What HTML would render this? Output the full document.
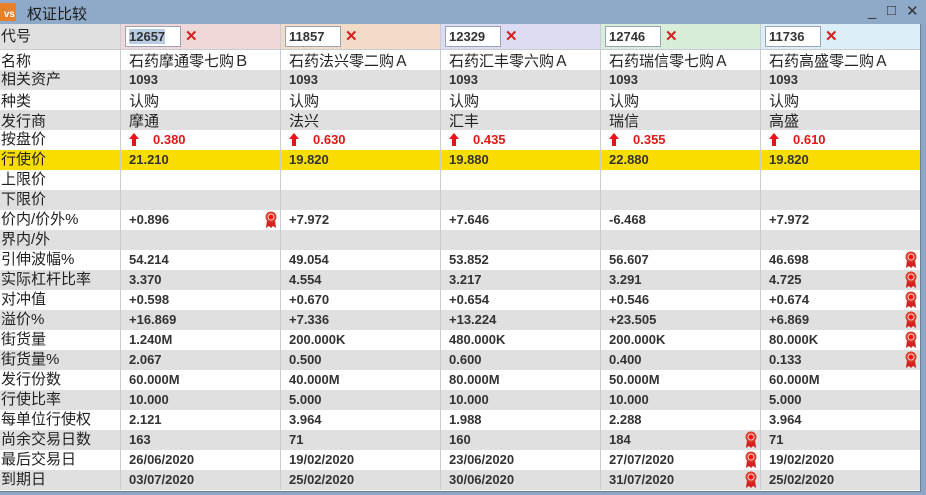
<!DOCTYPE html><html><head><meta charset="utf-8"><style>
*{margin:0;padding:0;box-sizing:border-box}
body{width:926px;height:495px;background:#8ea6c6;overflow:hidden;font-family:"Liberation Sans","Noto Sans CJK SC",sans-serif;position:relative}
.tb{position:absolute;left:0;top:0;width:926px;height:24px;background:#8fa9c9}
.logo{position:absolute;left:0;top:3px;width:16px;height:18px;background:#e8802a;color:#fff;font:bold 10px "Liberation Sans",sans-serif;line-height:24px;text-align:right;padding-right:1px}
.tt{position:absolute;left:27px;top:3px;font-size:15px;color:#1a1a1a}
.ctl{position:absolute;top:3px;font-size:15px;color:#333}
.win{position:absolute;left:0;top:24px;width:921px;height:468px;background:#fff;border-right:1px solid #6e7f96;border-bottom:1px solid #6e7f96}
.r{display:grid;grid-template-columns:120px 160px 160px 160px 160px 160px;height:20px}
.r>div{border-left:1px solid #c8ccd4;padding-left:8px;font:bold 13px "Liberation Sans",sans-serif;color:#333;line-height:20px;position:relative;white-space:nowrap}
.r>div:first-child{border-left:none;padding-left:1px;font:15px "Liberation Sans","Noto Sans CJK SC",sans-serif;color:#222;line-height:20px}
.g{background:#e0e0e0}
.y{background:#f8de00}
.cn>div{font:15px "Liberation Sans","Noto Sans CJK SC",sans-serif!important;color:#222!important}
.r.h{height:26px;border-bottom:1px solid #c8ccd4}
.r.h>div{line-height:25px}
.in{position:absolute;left:4px;top:2px;width:56px;height:21px;border:1px solid #9aa4b4;background:#fff;font:bold 13px "Liberation Sans",sans-serif;line-height:19px;padding-left:3px;color:#333}
.x{position:absolute;left:64px;top:3px;line-height:20px;color:#d42020;font:bold 15px "Liberation Sans",sans-serif}
.red{color:#e01818!important}
.ar{display:inline-block;width:24px;vertical-align:-2px}
.rb{position:absolute;right:3px;top:1px}
</style></head><body>
<div class="tb"><div class="logo">vs</div><div class="tt">权证比较</div>
<div class="ctl" style="left:868px;">_</div><div class="ctl" style="left:887px;top:2px">□</div><div class="ctl" style="left:906px;top:2px">✕</div></div>
<div class="win">
<div class="r h"><div class="g">代号</div>
<div style="background:#f0d8d8"><span class="in" style="background:#fff"><span style="background:#b8cce4">12657</span></span><span class="x">✕</span></div>
<div style="background:#f2dcc8"><span class="in">11857</span><span class="x">✕</span></div>
<div style="background:#dcdcf2"><span class="in">12329</span><span class="x">✕</span></div>
<div style="background:#d8eed8"><span class="in">12746</span><span class="x">✕</span></div>
<div style="background:#dceef6"><span class="in">11736</span><span class="x">✕</span></div></div>
<div class="r cn"><div>名称</div><div>石药摩通零七购Ｂ</div><div>石药法兴零二购Ａ</div><div>石药汇丰零六购Ａ</div><div>石药瑞信零七购Ａ</div><div>石药高盛零二购Ａ</div></div>
<div class="r g"><div>相关资产</div><div>1093</div><div>1093</div><div>1093</div><div>1093</div><div>1093</div></div>
<div class="r cn"><div>种类</div><div>认购</div><div>认购</div><div>认购</div><div>认购</div><div>认购</div></div>
<div class="r g cn"><div>发行商</div><div>摩通</div><div>法兴</div><div>汇丰</div><div>瑞信</div><div>高盛</div></div>
<div class="r"><div>按盘价</div>
<div class="red"><svg class="ar" width="24" height="13" viewBox="0 0 24 13"><path d="M5 0L10 6H7V13H3V6H0Z" fill="#e01818"/></svg>0.380</div>
<div class="red"><svg class="ar" width="24" height="13" viewBox="0 0 24 13"><path d="M5 0L10 6H7V13H3V6H0Z" fill="#e01818"/></svg>0.630</div>
<div class="red"><svg class="ar" width="24" height="13" viewBox="0 0 24 13"><path d="M5 0L10 6H7V13H3V6H0Z" fill="#e01818"/></svg>0.435</div>
<div class="red"><svg class="ar" width="24" height="13" viewBox="0 0 24 13"><path d="M5 0L10 6H7V13H3V6H0Z" fill="#e01818"/></svg>0.355</div>
<div class="red"><svg class="ar" width="24" height="13" viewBox="0 0 24 13"><path d="M5 0L10 6H7V13H3V6H0Z" fill="#e01818"/></svg>0.610</div></div>
<div class="r y"><div>行使价</div><div>21.210</div><div>19.820</div><div>19.880</div><div>22.880</div><div>19.820</div></div>
<div class="r"><div>上限价</div><div></div><div></div><div></div><div></div><div></div></div>
<div class="r g"><div>下限价</div><div></div><div></div><div></div><div></div><div></div></div>
<div class="r"><div>价内/价外%</div><div>+0.896<svg class="rb" width="12" height="18" viewBox="0 0 12 18"><path d="M2 9L1 17L4 15L6 17L8 15L11 17L10 9Z" fill="#d42020"/><circle cx="6" cy="6" r="5.5" fill="#d8402a"/><circle cx="6" cy="6" r="3" fill="#ff1010" stroke="#fff" stroke-width="0.8"/></svg></div><div>+7.972</div><div>+7.646</div><div>-6.468</div><div>+7.972</div></div>
<div class="r g"><div>界内/外</div><div></div><div></div><div></div><div></div><div></div></div>
<div class="r"><div>引伸波幅%</div><div>54.214</div><div>49.054</div><div>53.852</div><div>56.607</div><div>46.698<svg class="rb" width="12" height="18" viewBox="0 0 12 18"><path d="M2 9L1 17L4 15L6 17L8 15L11 17L10 9Z" fill="#d42020"/><circle cx="6" cy="6" r="5.5" fill="#d8402a"/><circle cx="6" cy="6" r="3" fill="#ff1010" stroke="#fff" stroke-width="0.8"/></svg></div></div>
<div class="r g"><div>实际杠杆比率</div><div>3.370</div><div>4.554</div><div>3.217</div><div>3.291</div><div>4.725<svg class="rb" width="12" height="18" viewBox="0 0 12 18"><path d="M2 9L1 17L4 15L6 17L8 15L11 17L10 9Z" fill="#d42020"/><circle cx="6" cy="6" r="5.5" fill="#d8402a"/><circle cx="6" cy="6" r="3" fill="#ff1010" stroke="#fff" stroke-width="0.8"/></svg></div></div>
<div class="r"><div>对冲值</div><div>+0.598</div><div>+0.670</div><div>+0.654</div><div>+0.546</div><div>+0.674<svg class="rb" width="12" height="18" viewBox="0 0 12 18"><path d="M2 9L1 17L4 15L6 17L8 15L11 17L10 9Z" fill="#d42020"/><circle cx="6" cy="6" r="5.5" fill="#d8402a"/><circle cx="6" cy="6" r="3" fill="#ff1010" stroke="#fff" stroke-width="0.8"/></svg></div></div>
<div class="r g"><div>溢价%</div><div>+16.869</div><div>+7.336</div><div>+13.224</div><div>+23.505</div><div>+6.869<svg class="rb" width="12" height="18" viewBox="0 0 12 18"><path d="M2 9L1 17L4 15L6 17L8 15L11 17L10 9Z" fill="#d42020"/><circle cx="6" cy="6" r="5.5" fill="#d8402a"/><circle cx="6" cy="6" r="3" fill="#ff1010" stroke="#fff" stroke-width="0.8"/></svg></div></div>
<div class="r"><div>街货量</div><div>1.240M</div><div>200.000K</div><div>480.000K</div><div>200.000K</div><div>80.000K<svg class="rb" width="12" height="18" viewBox="0 0 12 18"><path d="M2 9L1 17L4 15L6 17L8 15L11 17L10 9Z" fill="#d42020"/><circle cx="6" cy="6" r="5.5" fill="#d8402a"/><circle cx="6" cy="6" r="3" fill="#ff1010" stroke="#fff" stroke-width="0.8"/></svg></div></div>
<div class="r g"><div>街货量%</div><div>2.067</div><div>0.500</div><div>0.600</div><div>0.400</div><div>0.133<svg class="rb" width="12" height="18" viewBox="0 0 12 18"><path d="M2 9L1 17L4 15L6 17L8 15L11 17L10 9Z" fill="#d42020"/><circle cx="6" cy="6" r="5.5" fill="#d8402a"/><circle cx="6" cy="6" r="3" fill="#ff1010" stroke="#fff" stroke-width="0.8"/></svg></div></div>
<div class="r"><div>发行份数</div><div>60.000M</div><div>40.000M</div><div>80.000M</div><div>50.000M</div><div>60.000M</div></div>
<div class="r g"><div>行使比率</div><div>10.000</div><div>5.000</div><div>10.000</div><div>10.000</div><div>5.000</div></div>
<div class="r"><div>每单位行使权</div><div>2.121</div><div>3.964</div><div>1.988</div><div>2.288</div><div>3.964</div></div>
<div class="r g"><div>尚余交易日数</div><div>163</div><div>71</div><div>160</div><div>184<svg class="rb" width="12" height="18" viewBox="0 0 12 18"><path d="M2 9L1 17L4 15L6 17L8 15L11 17L10 9Z" fill="#d42020"/><circle cx="6" cy="6" r="5.5" fill="#d8402a"/><circle cx="6" cy="6" r="3" fill="#ff1010" stroke="#fff" stroke-width="0.8"/></svg></div><div>71</div></div>
<div class="r"><div>最后交易日</div><div>26/06/2020</div><div>19/02/2020</div><div>23/06/2020</div><div>27/07/2020<svg class="rb" width="12" height="18" viewBox="0 0 12 18"><path d="M2 9L1 17L4 15L6 17L8 15L11 17L10 9Z" fill="#d42020"/><circle cx="6" cy="6" r="5.5" fill="#d8402a"/><circle cx="6" cy="6" r="3" fill="#ff1010" stroke="#fff" stroke-width="0.8"/></svg></div><div>19/02/2020</div></div>
<div class="r g"><div>到期日</div><div>03/07/2020</div><div>25/02/2020</div><div>30/06/2020</div><div>31/07/2020<svg class="rb" width="12" height="18" viewBox="0 0 12 18"><path d="M2 9L1 17L4 15L6 17L8 15L11 17L10 9Z" fill="#d42020"/><circle cx="6" cy="6" r="5.5" fill="#d8402a"/><circle cx="6" cy="6" r="3" fill="#ff1010" stroke="#fff" stroke-width="0.8"/></svg></div><div>25/02/2020</div></div>
</div>
</body></html>
